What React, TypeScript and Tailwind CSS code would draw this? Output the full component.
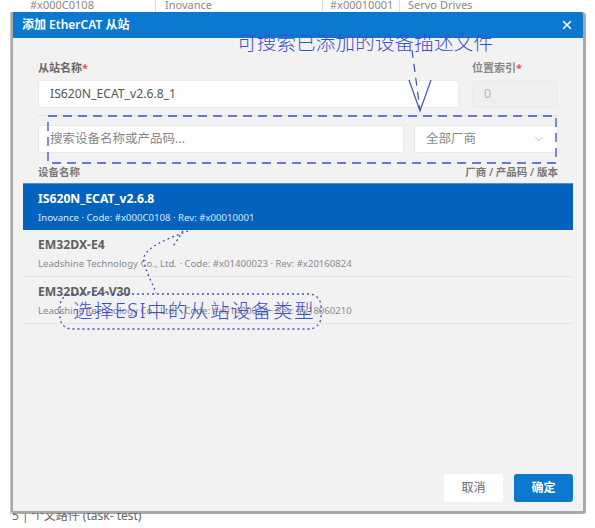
import React from "react";
import { ChevronDown, X } from "lucide-react";

type Device = {
    name: string;
    vendor: string;
    code: string;
    rev: string;
};

const devices: Device[] = [
    { name: "IS620N_ECAT_v2.6.8", vendor: "Inovance", code: "#x000C0108", rev: "#x00010001" },
    { name: "EM32DX-E4", vendor: "Leadshine Technology Co., Ltd.", code: "#x01400023", rev: "#x20160824" },
    { name: "EM32DX-E4-V30", vendor: "Leadshine Technology Co., Ltd.", code: "#x01400024", rev: "#x18060210" },
];

const font = "font-['Noto_Sans','Noto_Sans_CJK_SC',sans-serif]";

const DeviceRow = ({ device, selected }: { device: Device; selected: boolean }) => (
    <div
        className={
            selected
                ? "h-[47px] pl-[15px] pt-[6px] bg-[#0262be] border-t border-[#4a90d9]"
                : "h-[47px] pl-[15px] pt-[6px] border-b border-[#e4e4e4]"
        }
    >
        <div className={selected ? "text-[12.2px] leading-[18px] font-bold text-white" : "text-[12.2px] leading-[18px] font-bold text-[#606060]"}>
            {device.name}
        </div>
        <div className={selected ? "mt-[3px] text-[9.6px] leading-[14px] text-[#dce8f7]" : "mt-[3px] text-[9.6px] leading-[14px] text-[#8a8a8a]"}>
            {device.vendor} · Code: {device.code} · Rev: {device.rev}
        </div>
    </div>
);

const AddSlaveDialog = () => (
    <div className="w-[575px] h-[502px] flex flex-col border-l-2 border-r-[3px] border-b-[3px] border-[#a8a8a8] rounded-tr-[4px] rounded-b-[3px] overflow-hidden">
        <div className="h-[26px] shrink-0 bg-[#0a79cf] flex items-center justify-between pl-[9px] pr-[9px]">
            <span className="text-[12px] font-semibold text-white">添加 EtherCAT 从站</span>
            <X size={14} strokeWidth={2.5} className="text-white" />
        </div>

        <div className="flex-1 bg-[#f2f2f2] flex flex-col px-[10px] pt-[22px] pb-[9px]">
            <div className="px-[15px]">
                <div className="flex gap-[13px]">
                    <div className="flex-1">
                        <div className="h-[16px] text-[11px] leading-[16px] font-semibold text-[#666]">
                            从站名称<span className="text-[#e5484d]">*</span>
                        </div>
                        <div className="mt-[4px] h-[28px] bg-white rounded-[3px] border border-[#ebebeb] flex items-center pl-[11px] text-[12.2px] text-[#555]">
                            IS620N_ECAT_v2.6.8_1
                        </div>
                    </div>
                    <div className="w-[86px]">
                        <div className="h-[16px] text-[11px] leading-[16px] font-semibold text-[#888]">
                            位置索引<span className="text-[#e5484d]">*</span>
                        </div>
                        <div className="mt-[4px] h-[28px] bg-[#efefef] rounded-[3px] border border-[#eaeaea] flex items-center pl-[11px] text-[12.5px] text-[#b5b5b5]">
                            0
                        </div>
                    </div>
                </div>

                <div className="mt-[7px] border-t border-[#e2e2e2]" />

                <div className="mt-[9px] flex gap-[10px]">
                    <div className="flex-1 h-[28px] bg-white rounded-[3px] border border-[#e8e8ee] flex items-center pl-[11px] text-[12.5px] text-[#888]">
                        搜索设备名称或产品码...
                    </div>
                    <div className="w-[144px] h-[28px] bg-white rounded-[3px] border border-[#e8e8ee] flex items-center justify-between pl-[11px] pr-[11px] text-[12.5px] text-[#888]">
                        <span>全部厂商</span>
                        <ChevronDown size={14} strokeWidth={1.3} className="text-[#a8a8a8]" />
                    </div>
                </div>

                <div className="mt-[12px] flex justify-between text-[10.5px] leading-[14px] font-semibold text-[#777]">
                    <span>设备名称</span>
                    <span>厂商 / 产品码 / 版本</span>
                </div>
            </div>

            <div className="mt-[4px] flex flex-col">
                {devices.map((d, i) => (
                    <DeviceRow key={d.name} device={d} selected={i === 0} />
                ))}
            </div>

            <div className="mt-auto flex justify-end gap-[11px]">
                <button className="w-[59px] h-[28px] bg-white rounded-[3px] text-[12px] text-[#666]">取消</button>
                <button className="w-[59px] h-[28px] bg-[#0a79cf] rounded-[3px] text-[12px] font-semibold text-white">确定</button>
            </div>
        </div>
    </div>
);

const Notes = () => (
    <div className="absolute inset-0 pointer-events-none">
        <svg width="595" height="528" className="absolute inset-0" fill="none" stroke="#3c4fcf">
            {/* search area frame */}
            <path d="M48 116 H556 V163 H48 Z" strokeWidth="1.3" strokeDasharray="9 6" />
            {/* pointer from the top note */}
            <path d="M412 50 L420 110" strokeWidth="1.2" strokeDasharray="8 6" />
            <path d="M409 80 L420 111 L431 80" strokeWidth="1.2" />
            {/* pointer from the list note */}
            <path d="M188 231 C170 238 140 248 144 262 C147 275 153 284 156 293" strokeWidth="1.3" strokeDasharray="2 3" />
            <path d="M183 231 C178 238 176 243 172 247" strokeWidth="1.3" strokeDasharray="2 3" />
            <rect x="60" y="294" width="261" height="35" rx="12" strokeWidth="1.3" strokeDasharray="2 3" />
        </svg>
        <span className="absolute left-[237px] top-[30px] text-[19.5px] leading-[26px] text-[#3c4fcf] font-light tracking-[0.2px]">
            可搜索已添加的设备描述文件
        </span>
        <span className="absolute left-[73px] top-[298px] text-[19.5px] leading-[26px] text-[#3c4fcf] font-light tracking-[1.5px]">
            选择ESI中的从站设备类型
        </span>
    </div>
);

export default function App() {
    return (
        <div className={`${font} relative w-[595px] h-[528px] overflow-hidden bg-white`}>
            <div className="flex flex-col">
                <div className="h-[12px] overflow-hidden relative text-[11px] leading-[14px] text-[#8a8a8a]">
                    <div className="flex -mt-[2px]">
                        <span className="w-[156px] pl-[30px] border-r border-[#ddd]">#x000C0108</span>
                        <span className="w-[167px] pl-[9px] border-r border-[#ddd]">Inovance</span>
                        <span className="w-[77px] pl-[7px] border-r border-[#ddd]">#x00010001</span>
                        <span className="pl-[8px]">Servo Drives</span>
                    </div>
                </div>
                <div className="flex">
                    <div className="w-[11px] h-[502px] border-r border-[#c8c8c8]" />
                    <AddSlaveDialog />
                </div>
                <div className="h-[14px] overflow-hidden pl-[12px] text-[12px] leading-[14px] text-[#666] -mt-[1px]">
                    <span className="relative top-[-4px]">5 | 个文路件 (task- test)</span>
                </div>
            </div>
            <Notes />
        </div>
    );
}
